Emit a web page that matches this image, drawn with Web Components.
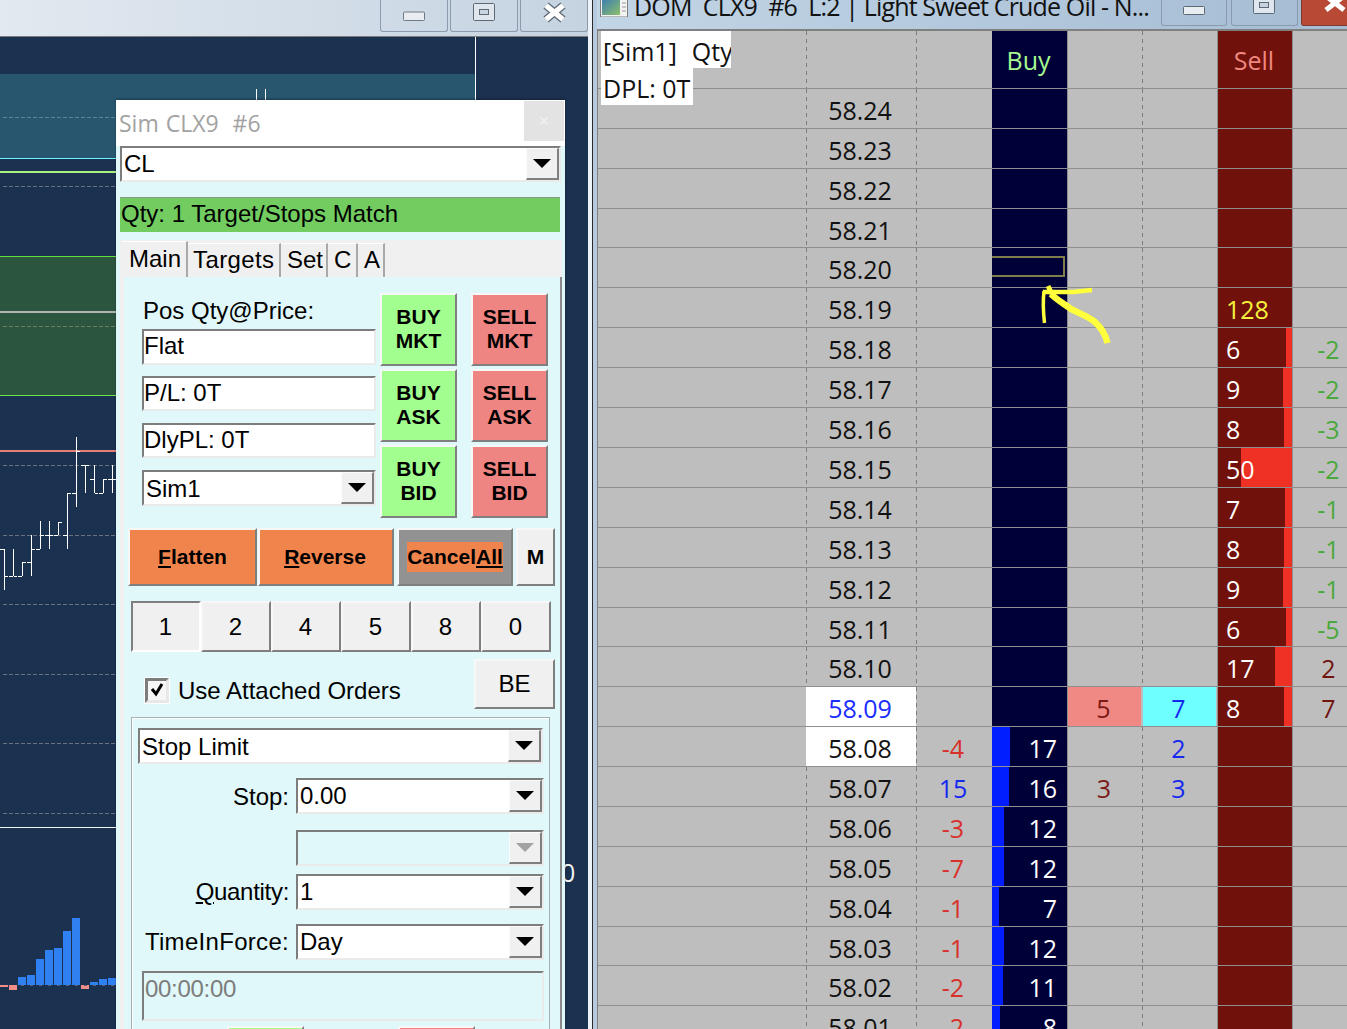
<!DOCTYPE html>
<html lang="en">
<head>
<meta charset="utf-8">
<title>DOM</title>
<style>
  html, body { margin: 0; padding: 0; background: #1b3150; overflow: hidden; }
</style>
</head>
<body>
<trade-desk></trade-desk>
<script>
const tpl = (html) => {
  const t = document.createElement("template");
  t.innerHTML = html;
  return t;
};

class ShadowElement extends HTMLElement {
  constructor() {
    super();
    this.attachShadow({ mode: "open" });
    this.shadowRoot.append(this.constructor.template.content.cloneNode(true));
  }
  $(selector) {
    return this.shadowRoot.querySelector(selector);
  }
}

/* ---------- small widgets ---------- */

class WinButton extends ShadowElement {
  static template = tpl(`
    <style>
    :host {
      display: block;
      width: 68px;
      height: 32px;
      box-sizing: border-box;
      border: 1px solid #8b9bae;
      border-top: 0;
      border-radius: 0 0 3px 3px;
      background: var(--face, transparent);
      overflow: hidden;
    }
    ::slotted(svg) { display: block; }
    </style>
    <slot></slot>
  `);
}

class BevelButton extends ShadowElement {
  static template = tpl(`
    <style>
    :host {
      display: flex;
      align-items: center;
      justify-content: center;
      box-sizing: border-box;
      text-align: center;
      line-height: 24px;
      background: var(--face, #f0f0f0);
      border: 2px solid;
      border-color: #f7f7f7 #7f7f7f #7f7f7f #f7f7f7;
      color: #000;
      font: 24px "Liberation Sans", Arial, sans-serif;
    }
    :host([bold]) { font-weight: bold; font-size: 21px; line-height: 24px; }
    :host([sunken]) { border-color: #7f7f7f #fff #fff #7f7f7f; }
    </style>
    <slot></slot>
  `);
}

class TextBox extends ShadowElement {
  static template = tpl(`
    <style>
    :host {
      display: flex;
      align-items: center;
      box-sizing: border-box;
      height: 36px;
      padding: 0 0 2px 0;
      background: #fff;
      border: 2px solid;
      border-color: #7d7d7d #eaeaea #eaeaea #7d7d7d;
      overflow: hidden;
    }
    :host([dim]) {
      background: #e0f8f9;
      color: #7d7d7d;
      align-items: flex-start;
      padding: 2px 0 0 1px;
      letter-spacing: -.3px;
    }
    </style>
    <slot></slot>
  `);
}

class ComboBox extends ShadowElement {
  static template = tpl(`
    <style>
    :host {
      display: flex;
      box-sizing: border-box;
      height: 36px;
      background: #fff;
      border: 2px solid;
      border-color: #7d7d7d #eaeaea #eaeaea #7d7d7d;
    }
    :host([disabled]) { background: #e0f8f9; }
    #value { flex: 1; display: flex; align-items: center; padding: var(--nudge, 1px) 0 0 2px; min-width: 0; }
    #drop {
      width: 33px;
      box-sizing: border-box;
      display: flex;
      align-items: center;
      justify-content: center;
      background: #f0f0f0;
      border: 1px solid;
      border-width: 1px 2px 2px 1px;
      border-color: #fbfbfb #7f7f7f #7f7f7f #fbfbfb;
    }
    polygon { fill: #000; }
    :host([disabled]) polygon { fill: #a3a3a3; }
    </style>
    <div id="value"><slot></slot></div>
    <div id="drop"><svg width="18" height="9" viewBox="0 0 18 9"><polygon points="0,0 18,0 9,9"/></svg></div>
  `);
}

/* ---------- order ticket dialog ---------- */

class OrderTicket extends ShadowElement {
  static template = tpl(`
    <style>
    :host {
      position: absolute;
      left: 116px;
      top: 100px;
      width: 449px;
      height: 929px;
      overflow: hidden;
      background: #e0f8f9;
      box-shadow: 0 -1px 2px rgba(0, 0, 0, .35);
      font: 24px "Liberation Sans", Arial, sans-serif;
      color: #000;
    }
    header {
      display: flex;
      justify-content: space-between;
      height: 46px;
      background: #fff;
    }
    #caption {
      padding: 6px 0 0 3px;
      font: 23px/34px "Open Sans", sans-serif;
      color: #a2a2a2;
      white-space: pre;
      word-spacing: 1px;
    }
    #close {
      width: 40px;
      height: 40px;
      margin: 1px 1px 0 0;
      background: #e3e3e3;
      color: #f2f2f2;
      font: 18px/40px "Liberation Sans", sans-serif;
      text-align: center;
    }
    #symbol { margin: 0 4px 15px 4px; --nudge: 0; }
    #match {
      box-sizing: border-box;
      height: 35px;
      margin: 0 5px 8px 4px;
      padding: 0 1px;
      line-height: 32px;
      background: #72cc60;
      border-top: 1px solid #8a9a88;
    }
    #tabs {
      display: flex;
      align-items: flex-end;
      height: 37px;
      margin: 0 3px 0 4px;
      padding-left: 2px;
      background: #f0f0f0;
    }
    .tab {
      box-sizing: border-box;
      height: 34px;
      padding-left: 6px;
      line-height: 32px;
      border-right: 2px solid #a9a9a9;
      border-top: 1px solid #fff;
    }
    .tab.on { height: 36px; line-height: 33px; padding-left: 7px; }
    #page {
      box-sizing: border-box;
      height: 752px;
      margin: 0 3px 0 4px;
      padding-top: 16px;
      border-left: 4px solid #f0f0f0;
      border-right: 2px solid #8a8a8a;
    }
    #entry { display: flex; margin-left: 18px; }
    #fields { display: flex; flex-direction: column; width: 234px; margin-right: 4px; }
    #fields label { height: 36px; line-height: 36px; padding-left: 1px; }
    #fields text-box + text-box, #fields text-box + combo-box { margin-top: 12px; }
    #fields text-box { height: 35px; }
    #fields text-box:first-of-type { height: 36px; }
    #fields text-box:nth-of-type(2) { margin-top: 11px; }
    .side { display: flex; flex-direction: column; gap: 3px; width: 77px; }
    .side + .side { margin-left: 14px; }
    .side bevel-button { height: 73px; padding-bottom: 2px; }
    #actions { display: flex; height: 58px; margin: 10px 0 0 4px; }
    #actions span { background: #f0844d; padding: 3px 0; line-height: 24px; }
    #sizes { display: flex; height: 51px; margin: 15px 0 0 7px; }
    #sizes bevel-button { width: 70px; padding-right: 1px; }
    #attached { display: flex; height: 50px; margin: 7px 5px 0 21px; }
    #check {
      box-sizing: border-box;
      width: 24px;
      height: 25px;
      margin-top: 19px;
      background: #f6f6f6;
      border: 3px solid #7d7d7d;
      border-color: #7d7d7d #e8e8e8 #e8e8e8 #7d7d7d;
      outline: 1px solid #fff;
    }
    #check svg { display: block; }
    #attached label { margin: 19px 0 0 9px; line-height: 26px; }
    #attached bevel-button { width: 81px; margin-left: auto; }
    #group {
      box-sizing: border-box;
      width: 419px;
      height: 340px;
      margin: 8px 0 0 7px;
      padding: 10px 0 0 6px;
      border: 1px solid #a5b0b2;
      box-shadow: inset 1px 1px 0 #fff;
    }
    .row { display: flex; margin-top: 14px; width: 406px; }
    .row label { width: 151px; margin-right: 7px; line-height: 36px; text-align: right; white-space: pre; }
    .row combo-box { width: 248px; --nudge: 0; }
    #expire { width: 402px; height: 50px; margin: 11px 0 0 4px; }
    #submit { display: flex; margin: 5px 0 0 89px; gap: 94px; }
    #submit bevel-button { width: 77px; height: 60px; }
    </style>

    <header>
      <div id="caption">Sim CLX9  #6</div>
      <div id="close">×</div>
    </header>
    <combo-box id="symbol">CL</combo-box>
    <div id="match">Qty: 1 Target/Stops Match</div>

    <nav id="tabs">
      <div class="tab on" style="width:66px">Main</div>
      <div class="tab" style="width:93px;padding-left:5px;letter-spacing:.4px">Targets</div>
      <div class="tab" style="width:47px">Set</div>
      <div class="tab" style="width:30px">C</div>
      <div class="tab" style="width:27px">A</div>
    </nav>

    <section id="page">
      <div id="entry">
        <div id="fields">
          <label>Pos Qty@Price:</label>
          <text-box>Flat</text-box>
          <text-box>P/L: 0T</text-box>
          <text-box>DlyPL: 0T</text-box>
          <combo-box>Sim1</combo-box>
        </div>
        <div class="side" style="--face:#a2fe8e">
          <bevel-button bold>BUY<br>MKT</bevel-button>
          <bevel-button bold>BUY<br>ASK</bevel-button>
          <bevel-button bold>BUY<br>BID</bevel-button>
        </div>
        <div class="side" style="--face:#ef8582">
          <bevel-button bold>SELL<br>MKT</bevel-button>
          <bevel-button bold>SELL<br>ASK</bevel-button>
          <bevel-button bold>SELL<br>BID</bevel-button>
        </div>
      </div>

      <div id="actions">
        <bevel-button bold style="--face:#f0844d;width:129px;margin-right:1px"><u>F</u>latten</bevel-button>
        <bevel-button bold style="--face:#f0844d;width:136px;margin-right:3px;padding-right:2px"><u>R</u>everse</bevel-button>
        <bevel-button bold style="--face:#929292;width:116px;margin-right:3px"><span>Cancel<u>All</u></span></bevel-button>
        <bevel-button bold style="width:39px">M</bevel-button>
      </div>

      <div id="sizes">
        <bevel-button sunken>1</bevel-button>
        <bevel-button>2</bevel-button>
        <bevel-button>4</bevel-button>
        <bevel-button>5</bevel-button>
        <bevel-button>8</bevel-button>
        <bevel-button>0</bevel-button>
      </div>

      <div id="attached">
        <div id="check"><svg width="18" height="19" viewBox="0 0 18 19"><path d="M4 8l4 5 6-10" fill="none" stroke="#000" stroke-width="3"/></svg></div>
        <label>Use Attached Orders</label>
        <bevel-button>BE</bevel-button>
      </div>

      <div id="group">
        <combo-box style="width:405px">Stop Limit</combo-box>
        <div class="row"><label style="padding-top:1px">Stop:</label><combo-box>0.00</combo-box></div>
        <div class="row" style="margin-top:15px"><label></label><combo-box disabled></combo-box></div>
        <div class="row" style="margin-top:8px"><label style="letter-spacing:-.3px"><u>Q</u>uantity:</label><combo-box>1</combo-box></div>
        <div class="row"><label style="letter-spacing:.3px">TimeInForce:</label><combo-box>Day</combo-box></div>
        <text-box id="expire" dim>00:00:00</text-box>
        <div id="submit">
          <bevel-button style="--face:#a2fe8e"></bevel-button>
          <bevel-button style="--face:#ef8582"></bevel-button>
        </div>
      </div>
    </section>
  `);
}

/* ---------- chart window ---------- */

// x-centre of first bar is 4.5, bars are 9px apart: [high, low, open, close]
const OHLC = [
  [549, 590, 549, 576], [549, 576, 576, 576], [562, 576, 576, 562], [535, 576, 562, 549],
  [521, 549, 549, 535], [521, 549, 535, 535], [522, 535, 535, 522], [493, 549, 535, 493],
  [437, 507, 493, 451], [465, 493, 465, 465], [465, 493, 479, 493], [479, 493, 493, 479],
  [465, 493, 479, 479],
];
// [left, top, bottom, colour]
const VOLUME = [
  [0, 985, 987, "p"], [9, 985, 990, "p"], [18, 977, 985], [27, 975, 985], [36, 959, 985],
  [45, 950, 985], [54, 948, 985], [63, 931, 985], [72, 918, 985], [81, 985, 989, "p"],
  [90, 982, 985], [99, 979, 985], [108, 978, 985],
];

class ChartPane extends ShadowElement {
  static template = tpl(`
    <style>
    :host { display: block; flex: 1; min-height: 0; background: #1b3150; }
    svg { display: block; }
    text { font: 25px "Open Sans", sans-serif; fill: #f4f4f4; }
    </style>
    <svg width="588" height="992" viewBox="0 37 588 992"></svg>
  `);

  connectedCallback() {
    let s = `
      <rect x="0" y="74" width="475" height="84" fill="#27566e"/>
      <rect x="0" y="257" width="475" height="138" fill="#2b553f"/>
      <rect x="0" y="158" width="475" height="1" fill="#6ff4ff"/>
      <rect x="0" y="171" width="475" height="2" fill="#a8f080"/>
      <rect x="0" y="256" width="475" height="1" fill="#5fe03f"/>
      <rect x="0" y="311" width="475" height="2" fill="#b4b4b4"/>
      <rect x="0" y="395" width="475" height="1" fill="#6fe84f"/>
      <rect x="0" y="450" width="475" height="2" fill="#e57f7a"/>
      <rect x="0" y="827" width="475" height="1" fill="#f2f6fa"/>
      <rect x="475" y="37" width="1" height="63" fill="#fff"/>
      <rect x="256" y="89" width="1" height="11" fill="#fff"/>
      <rect x="265" y="89" width="1" height="11" fill="#fff"/>
      <text x="561" y="882">0</text>
    `;
    for (const [y, c] of [[117, "#5c8392"], [186, "#6a7280"], [326, "#67805f"], [465, "#6a7280"],
      [535, "#6a7280"], [604, "#6a7280"], [674, "#6a7280"], [743, "#6a7280"], [813, "#6a7280"]]) {
      s += `<line x1="3" x2="116" y1="${y + .5}" y2="${y + .5}" stroke="${c}" stroke-dasharray="4 2"/>`;
    }
    OHLC.forEach(([hi, lo, open, close], i) => {
      const x = 4 + i * 9;
      s += `<rect x="${x}" y="${hi}" width="1" height="${lo - hi}" fill="#fff"/>`;
      s += `<rect x="${x - 4}" y="${open}" width="4" height="1" fill="#fff"/>`;
      s += `<rect x="${x + 1}" y="${close}" width="3" height="1" fill="#fff"/>`;
    });
    for (const [x, top, bottom, kind] of VOLUME) {
      s += `<rect x="${x}" y="${top}" width="8" height="${bottom - top}" fill="${kind ? "#f28c88" : "#2f80f0"}"/>`;
    }
    s += `<line x1="21" x2="116" y1="985.5" y2="985.5" stroke="#5a6678" stroke-dasharray="3 6"/>`;
    this.$("svg").innerHTML = s;
  }
}

class ChartWindow extends ShadowElement {
  static template = tpl(`
    <style>
    :host {
      position: relative;
      display: flex;
      flex-direction: column;
      width: 588px;
      height: 1029px;
    }
    header {
      display: flex;
      justify-content: flex-end;
      gap: 2px;
      height: 36px;
      background: linear-gradient(90deg, #e2e9f0, #c5d3e1);
      border-bottom: 1px solid #7b7b7b;
    }
    win-button { width: 68px; }
    </style>
    <header>
      <win-button>
        <svg width="66" height="31" viewBox="0 0 66 31"><rect x="22.5" y="12" width="21" height="8.5" rx="1" fill="#e8edf2" stroke="#707a86"/></svg>
      </win-button>
      <win-button>
        <svg width="66" height="31" viewBox="0 0 66 31"><rect x="22.5" y="3.5" width="21" height="17" rx="1" fill="#dfe6ee" stroke="#5e6874"/><rect x="28.5" y="9.5" width="9" height="5" fill="#c8d4e0" stroke="#5e6874"/></svg>
      </win-button>
      <win-button>
        <svg width="66" height="31" viewBox="0 0 66 31"><path d="M25 5.5l17 14M42 5.5l-17 14" fill="none" stroke="#5e6874" stroke-width="8"/><path d="M25 5.5l17 14M42 5.5l-17 14" fill="none" stroke="#fff" stroke-width="5.5"/></svg>
      </win-button>
    </header>
    <chart-pane></chart-pane>
    <order-ticket></order-ticket>
  `);
}

/* ---------- price ladder ---------- */

class LadderRow extends ShadowElement {
  static template = tpl(`
    <style>
    :host {
      display: grid;
      grid-template-columns: 208px 110px 76px 76px 74px 75px 76px 73px;
      box-sizing: border-box;
      height: 40px;
      border-bottom: 1px solid #8f8f8f;
      font: 25px "Open Sans", sans-serif;
      color: #111;
    }
    div { display: flex; align-items: center; justify-content: center; padding: 3px 2px 0 0; box-sizing: border-box; min-width: 0; }
    .dash { background: linear-gradient(#7d7d7d 50%, transparent 50%) left top / 1px 8px repeat-y; }
    #buy {
      position: relative;
      justify-content: flex-end;
      padding-right: 10px;
      color: #fff;
      background: linear-gradient(to right, #001eff var(--bar, 0), #000038 var(--bar, 0));
      border-right: 1px solid #8f8f8f;
    }
    #sell {
      justify-content: flex-start;
      padding-left: 8px;
      padding-right: 0;
      color: #fff;
      background: linear-gradient(to left, #ee3124 var(--bar, 0), #70110b var(--bar, 0));
      border-left: 1px solid #8f8f8f;
      border-right: 1px solid #8f8f8f;
    }
    #ask { color: #7c1a14; }
    #bid { color: #1528f0; }
    :host([inside]) #ask { background: #f08884; margin-right: 1px; }
    :host([inside]) #bid { background: #6effff; margin: 0 1px; }
    :host([mark="hi"]) #price { background: #fff; }
    :host([mark="last"]) #price { background: #fff; color: #1a2cff; }
    :host([header]) { height: 58px; }
    :host([header]) #buy { color: #a6f98f; justify-content: center; padding: 1px 2px 0 0; }
    :host([header]) #sell { color: #ee8880; justify-content: center; padding: 1px 2px 0 0; }
    #cursor {
      display: none;
      position: absolute;
      left: 0;
      top: 8px;
      width: 73px;
      height: 21px;
      padding: 0;
      border: 2px solid #807d4a;
      border-left: 0;
    }
    :host([cursor]) #cursor { display: block; }
    </style>
    <div></div>
    <div id="price" class="dash"></div>
    <div id="vol" class="dash"></div>
    <div id="buy"><span></span><div id="cursor"></div></div>
    <div id="ask"></div>
    <div id="bid" class="dash"></div>
    <div id="sell"></div>
    <div id="last"></div>
  `);

  connectedCallback() {
    const set = (id, attr, colorAttr) => {
      const cell = this.$(id);
      const target = id === "#buy" ? cell.querySelector("span") : cell;
      target.textContent = this.getAttribute(attr) || "";
      if (colorAttr && this.hasAttribute(colorAttr)) cell.style.color = this.getAttribute(colorAttr);
    };
    set("#price", "price");
    set("#vol", "vol", "vol-color");
    set("#buy", "buy");
    set("#ask", "ask");
    set("#bid", "bid");
    set("#sell", "sell", "sell-color");
    set("#last", "last", "last-color");
    if (this.hasAttribute("buy-bar")) this.$("#buy").style.setProperty("--bar", this.getAttribute("buy-bar") + "px");
    if (this.hasAttribute("sell-bar")) this.$("#sell").style.setProperty("--bar", this.getAttribute("sell-bar") + "px");
    this.style.height = (this.getAttribute("h") || (this.hasAttribute("header") ? 58 : 40)) + "px";
  }
}

const RED = "#d8302a";
const GREEN = "#4aa83c";
const MAROON = "#701510";
const ROWS = [
  { price: "58.24" },
  { price: "58.23" },
  { price: "58.22" },
  { price: "58.21", h: 39 },
  { price: "58.20", cursor: "" },
  { price: "58.19", sell: "128", "sell-color": "#f6f23c" },
  { price: "58.18", sell: "6", "sell-bar": 6, last: "-2", "last-color": GREEN },
  { price: "58.17", sell: "9", "sell-bar": 9, last: "-2", "last-color": GREEN },
  { price: "58.16", sell: "8", "sell-bar": 8, last: "-3", "last-color": GREEN },
  { price: "58.15", sell: "50", "sell-bar": 51, last: "-2", "last-color": GREEN },
  { price: "58.14", sell: "7", "sell-bar": 7, last: "-1", "last-color": GREEN },
  { price: "58.13", sell: "8", "sell-bar": 8, last: "-1", "last-color": GREEN },
  { price: "58.12", sell: "9", "sell-bar": 9, last: "-1", "last-color": GREEN },
  { price: "58.11", sell: "6", "sell-bar": 6, last: "-5", "last-color": GREEN, h: 39 },
  { price: "58.10", sell: "17", "sell-bar": 17, last: "2", "last-color": MAROON },
  { price: "58.09", mark: "last", inside: "", ask: "5", bid: "7", sell: "8", "sell-bar": 8, last: "7", "last-color": MAROON },
  { price: "58.08", mark: "hi", vol: "-4", "vol-color": RED, buy: "17", "buy-bar": 18, bid: "2" },
  { price: "58.07", vol: "15", "vol-color": "#1528f0", buy: "16", "buy-bar": 17, ask: "3", bid: "3" },
  { price: "58.06", vol: "-3", "vol-color": RED, buy: "12", "buy-bar": 12 },
  { price: "58.05", vol: "-7", "vol-color": RED, buy: "12", "buy-bar": 12 },
  { price: "58.04", vol: "-1", "vol-color": RED, buy: "7", "buy-bar": 7 },
  { price: "58.03", vol: "-1", "vol-color": RED, buy: "12", "buy-bar": 12, h: 39 },
  { price: "58.02", vol: "-2", "vol-color": RED, buy: "11", "buy-bar": 11 },
  { price: "58.01", vol: "-2", "vol-color": RED, buy: "8", "buy-bar": 8 },
];

class PriceLadder extends ShadowElement {
  static template = tpl(`
    <style>
    :host {
      position: relative;
      display: block;
      flex: 1;
      min-height: 0;
      overflow: hidden;
      background: #bebebe;
      border-left: 1px solid #808080;
      font: 25px "Open Sans", sans-serif;
      color: #111;
    }
    .tag {
      position: absolute;
      left: 3px;
      padding: 2px 0 0 2px;
      background: #fff;
      overflow: hidden;
      white-space: pre;
      line-height: 37px;
      box-sizing: border-box;
    }
    #acct { top: 0; width: 130px; height: 37px; word-spacing: 1px; }
    #dpl { top: 37px; width: 92px; height: 37px; }
    svg { position: absolute; left: 0; top: 0; pointer-events: none; }
    </style>
    <div id="rows"></div>
    <div class="tag" id="acct">[Sim1]  Qty</div>
    <div class="tag" id="dpl">DPL: 0T</div>
    <svg width="750" height="998" viewBox="597 31 750 998">
      <g fill="none" stroke="#ffff3b" stroke-linejoin="round" stroke-linecap="butt">
        <path d="M1043.5 323 C1042 310 1042 300 1043 291" stroke-width="3.5"/>
        <path d="M1042 292 L1072 292 L1091 290" stroke-width="4.5"/>
        <path d="M1047 286 L1051 294" stroke-width="5"/>
        <path d="M1050 294 C1056 300 1062 303 1070 309 C1080 314 1088 317 1094 322 C1100 328 1104 333 1106.5 343" stroke-width="6.5"/>
      </g>
    </svg>
  `);

  connectedCallback() {
    const rows = this.$("#rows");
    const head = document.createElement("ladder-row");
    head.setAttribute("header", "");
    head.setAttribute("buy", "Buy");
    head.setAttribute("sell", "Sell");
    rows.append(head);
    for (const data of ROWS) {
      const row = document.createElement("ladder-row");
      for (const [k, v] of Object.entries(data)) row.setAttribute(k, v);
      rows.append(row);
    }
  }
}

class LadderWindow extends ShadowElement {
  static template = tpl(`
    <style>
    :host {
      display: flex;
      flex-direction: column;
      flex: 1;
      min-width: 0;
      height: 1029px;
      font: 25px "Open Sans", sans-serif;
    }
    header {
      display: flex;
      height: 29px;
      overflow: hidden;
      background: linear-gradient(90deg, #c2d5e6, #a5bcd3);
      border-bottom: 2px solid #808080;
    }
    #icon { margin: 0 6px 0 3px; flex: none; }
    #title {
      width: 527px;
      flex: none;
      line-height: 20px;
      margin-top: -4px;
      color: #111;
      overflow: hidden;
      white-space: pre;
      letter-spacing: -.85px;
    }
    win-button { flex: none; height: 26px; }
    </style>
    <header>
      <svg id="icon" width="28" height="17" viewBox="0 0 28 17">
        <defs><linearGradient id="g" x1="0" y1="0" x2="1" y2="1"><stop offset="0" stop-color="#3f7fb0"/><stop offset="1" stop-color="#8cc06a"/></linearGradient></defs>
        <rect x=".5" y="-1" width="27" height="18" fill="#f2f2f2" stroke="#7d7d7d"/>
        <rect x="2" y="0" width="18" height="15" fill="url(#g)"/>
        <path d="M22 3h4M22 7h4M22 11h4" stroke="#9a9a9a"/>
      </svg>
      <div id="title">DOM  CLX9  #6  L:2 | Light Sweet Crude Oil - N...</div>
      <win-button style="width:66px;margin-right:4px">
        <svg width="64" height="25" viewBox="0 0 64 25"><rect x="21.5" y="6.5" width="21" height="8" rx="1" fill="#e8edf2" stroke="#5e6874"/></svg>
      </win-button>
      <win-button style="width:67px;margin-right:3px">
        <svg width="65" height="25" viewBox="0 0 65 25"><rect x="21.5" y="-3.5" width="21" height="17" rx="1" fill="#dfe6ee" stroke="#5e6874"/><rect x="27.5" y="2.5" width="9" height="5" fill="#c8d4e0" stroke="#5e6874"/></svg>
      </win-button>
      <win-button style="width:66px;--face:#b84a35;border-color:#7d3a2e">
        <svg width="64" height="25" viewBox="0 0 64 25"><path d="M24 -4l18 14M42 -4l-18 14" fill="none" stroke="#fff" stroke-width="5"/></svg>
      </win-button>
    </header>
    <price-ladder></price-ladder>
  `);
}

class TradeDesk extends ShadowElement {
  static template = tpl(`
    <style>
    :host {
      display: flex;
      width: 1347px;
      height: 1029px;
      overflow: hidden;
    }
    #frame {
      flex: none;
      box-sizing: border-box;
      width: 9px;
      background: #b6c9de;
      border-left: 4px solid #edf3f8;
      box-shadow: inset 1px 0 0 #2a2a2a;
    }
    </style>
    <chart-window></chart-window>
    <div id="frame"></div>
    <ladder-window></ladder-window>
  `);
}

customElements.define("win-button", WinButton);
customElements.define("bevel-button", BevelButton);
customElements.define("text-box", TextBox);
customElements.define("combo-box", ComboBox);
customElements.define("order-ticket", OrderTicket);
customElements.define("chart-pane", ChartPane);
customElements.define("chart-window", ChartWindow);
customElements.define("ladder-row", LadderRow);
customElements.define("price-ladder", PriceLadder);
customElements.define("ladder-window", LadderWindow);
customElements.define("trade-desk", TradeDesk);
</script>
</body>
</html>
